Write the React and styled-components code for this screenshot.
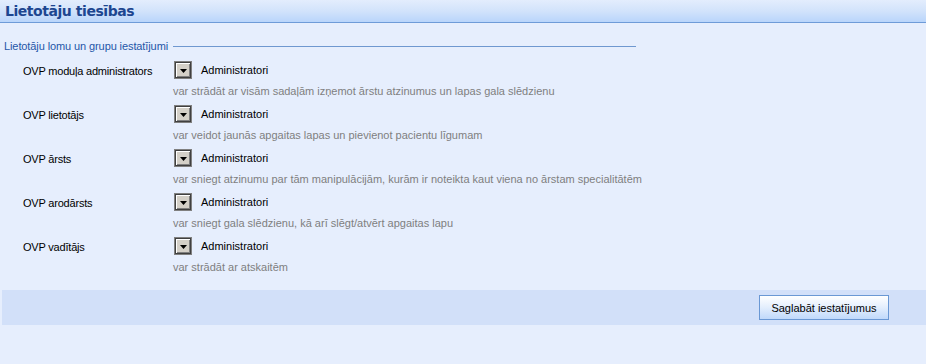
import React from "react";
import styled, { createGlobalStyle } from "styled-components";

const Global = createGlobalStyle`
  html, body { margin: 0; padding: 0; background: #e6eefd; }
  body { font-family: "Liberation Sans", Arial, sans-serif; font-size: 11px; color: #000; }
`;

const Page = styled.div`
  width: 926px;
  height: 364px;
  background: #e6eefd;
  display: flex;
  flex-direction: column;
  overflow: hidden;
`;

const Header = styled.div`
  height: 23px;
  box-sizing: border-box;
  border-bottom: 1px solid #6e9bd8;
  background: linear-gradient(to bottom, #e3edfd 0%, #d2e3fb 50%, #b9d5fb 100%);
  display: flex;
  align-items: center;
  padding-left: 5px;
`;

const Title = styled.h1`
  margin: 0;
  font-family: "DejaVu Sans", Verdana, sans-serif;
  font-size: 14px;
  letter-spacing: -0.45px;
  font-weight: bold;
  color: #1d4690;
`;

const Fieldset = styled.div`
  padding: 16px 0 0 4px;
  width: 632px;
`;

const Legend = styled.div`
  display: flex;
  align-items: center;
  gap: 5px;
  color: #1f56a8;
  font-size: 11px;
  height: 14px;
  span { letter-spacing: -0.1px; }
`;

const LegendLine = styled.div`
  flex: 1;
  height: 1px;
  background: #6f98d0;
`;

const Rows = styled.div`
  display: flex;
  flex-direction: column;
  padding-top: 7px;
  padding-left: 19px;
`;

const Row = styled.div`
  display: grid;
  grid-template-columns: 150px 1fr;
  height: 44px;
  white-space: nowrap;
`;

const Label = styled.div`
  font-size: 11px;
  letter-spacing: -0.2px;
  padding-top: 5px;
`;

const Right = styled.div`
  display: flex;
  flex-direction: column;
  padding-top: 1px;
`;

const SelectLine = styled.div`
  display: flex;
  align-items: center;
  gap: 9px;
  height: 18px;
  padding-left: 1px;
`;

const DropButton = styled.div`
  width: 18px;
  height: 18px;
  box-sizing: border-box;
  border: 1px solid #808080;
  background: #404040;
  padding: 1px;
  display: flex;
`;

const DropInner = styled.div`
  flex: 1;
  background: #d4d0c8;
  box-shadow: inset 1px 1px 0 #ffffff, inset -1px -1px 0 #808080;
  display: flex;
  align-items: center;
  justify-content: center;
  padding-top: 1px;
`;

const Value = styled.span`
  font-size: 11px;
`;

const Desc = styled.div`
  font-size: 11px;
  color: #7f7f7f;
  padding-top: 6px;
`;

const Footer = styled.div`
  margin-top: 10px;
  margin-left: 2px;
  height: 35px;
  background: #d2e0f9;
  display: flex;
  align-items: center;
  justify-content: flex-end;
  padding-right: 37px;
`;

const SaveButton = styled.button`
  width: 130px;
  height: 25px;
  border: 1px solid #6a98d4;
  background: linear-gradient(to bottom, #ffffff 0%, #e6f0fd 45%, #c0d9fb 100%);
  font-family: "Liberation Sans", Arial, sans-serif;
  font-size: 11px;
  color: #000;
  padding: 0;
`;

const roles = [
  ["OVP moduļa administrators", "var strādāt ar visām sadaļām izņemot ārstu atzinumus un lapas gala slēdzienu"],
  ["OVP lietotājs", "var veidot jaunās apgaitas lapas un pievienot pacientu līgumam"],
  ["OVP ārsts", "var sniegt atzinumu par tām manipulācijām, kurām ir noteikta kaut viena no ārstam specialitātēm"],
  ["OVP arodārsts", "var sniegt gala slēdzienu, kā arī slēgt/atvērt apgaitas lapu"],
  ["OVP vadītājs", "var strādāt ar atskaitēm"],
];

export default function App() {
  return (
    <Page>
      <Global />
      <Header>
        <Title>Lietotāju tiesības</Title>
      </Header>
      <Fieldset>
        <Legend>
          <span>Lietotāju lomu un grupu iestatījumi</span>
          <LegendLine />
        </Legend>
        <Rows>
          {roles.map(([label, desc]) => (
            <Row key={label}>
              <Label>{label}</Label>
              <Right>
                <SelectLine>
                  <DropButton>
                    <DropInner>
                      <svg width="7" height="4" viewBox="0 0 7 4">
                        <path d="M0 0h7L3.5 4z" fill="#000" />
                      </svg>
                    </DropInner>
                  </DropButton>
                  <Value>Administratori</Value>
                </SelectLine>
                <Desc>{desc}</Desc>
              </Right>
            </Row>
          ))}
        </Rows>
      </Fieldset>
      <Footer>
        <SaveButton>Saglabāt iestatījumus</SaveButton>
      </Footer>
    </Page>
  );
}
